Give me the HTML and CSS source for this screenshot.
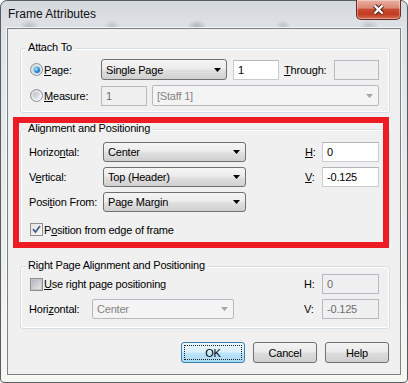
FILE: index.html
```html
<!DOCTYPE html>
<html lang="en">
<head>
    <meta charset="UTF-8">
    <title>Frame Attributes</title>
    <link rel="stylesheet" href="styles.css">
</head>
<body>
    <div class="window">
        <div class="titlebar">
            <span class="title">Frame Attributes</span>
            <div class="close-btn">
                <svg width="13" height="11" viewBox="0 0 13 11">
                    <path d="M2.5 1.5 L10.5 9.5 M10.5 1.5 L2.5 9.5" stroke="#4a1f17" stroke-width="4.2" fill="none"/>
                    <path d="M2.5 1.5 L10.5 9.5 M10.5 1.5 L2.5 9.5" stroke="#fff" stroke-width="2.4" fill="none"/>
                </svg>
            </div>
        </div>

        <div class="client">
            <!-- Attach To -->
            <div class="group attach">
                <span class="group-title">Attach To</span>
                <div class="row">
                    <label class="lead"><span class="radio on"></span><span><u>P</u>age:</span></label>
                    <div class="combo w-page">
                        <span>Single Page</span>
                        <svg class="arrow" width="7" height="4" viewBox="0 0 7 4"><path d="M0 0h7L3.5 4z"/></svg>
                    </div>
                    <div class="textbox w-num gap-6">1</div>
                    <span class="through"><u>T</u>hrough:</span>
                    <div class="textbox disabled w-thru"></div>
                </div>
                <div class="row">
                    <label class="lead"><span class="radio"></span><span><u>M</u>easure:</span></label>
                    <div class="textbox disabled w-num">1</div>
                    <div class="combo disabled w-staff">
                        <span>[Staff 1]</span>
                        <svg class="arrow" width="7" height="4" viewBox="0 0 7 4"><path d="M0 0h7L3.5 4z"/></svg>
                    </div>
                </div>
            </div>

            <!-- Alignment and Positioning -->
            <div class="group align">
                <span class="group-title">Alignment and Positioning</span>
                <div class="row">
                    <span class="field-label">Horizo<u>n</u>tal:</span>
                    <div class="combo w-align">
                        <span>Center</span>
                        <svg class="arrow" width="7" height="4" viewBox="0 0 7 4"><path d="M0 0h7L3.5 4z"/></svg>
                    </div>
                    <div class="side">
                        <span class="side-label"><u>H</u>:</span>
                        <div class="textbox w-hv">0</div>
                    </div>
                </div>
                <div class="row">
                    <span class="field-label">V<u>e</u>rtical:</span>
                    <div class="combo w-align">
                        <span>Top (Header)</span>
                        <svg class="arrow" width="7" height="4" viewBox="0 0 7 4"><path d="M0 0h7L3.5 4z"/></svg>
                    </div>
                    <div class="side">
                        <span class="side-label"><u>V</u>:</span>
                        <div class="textbox w-hv">-0.125</div>
                    </div>
                </div>
                <div class="row">
                    <span class="field-label">Posi<u>t</u>ion From:</span>
                    <div class="combo w-align">
                        <span>Page Margin</span>
                        <svg class="arrow" width="7" height="4" viewBox="0 0 7 4"><path d="M0 0h7L3.5 4z"/></svg>
                    </div>
                </div>
                <label class="check-row">
                    <span class="checkbox">
                        <svg width="9" height="9" viewBox="0 0 9 9"><path d="M1 4.2 L3.5 7 L8 1" stroke="#4c5f8e" stroke-width="1.8" fill="none"/></svg>
                    </span>
                    <span>P<u>o</u>sition from edge of frame</span>
                </label>
            </div>

            <!-- Right Page Alignment and Positioning -->
            <div class="group right-page">
                <span class="group-title">Right Page Alignment and Positioning</span>
                <div class="row">
                    <label class="check-row">
                        <span class="checkbox off"></span>
                        <span><u>U</u>se right page positioning</span>
                    </label>
                    <div class="side">
                        <span class="side-label wide">H:</span>
                        <div class="textbox disabled w-hv">0</div>
                    </div>
                </div>
                <div class="row">
                    <span class="field-label short">Hori<u>z</u>ontal:</span>
                    <div class="combo disabled w-right">
                        <span>Center</span>
                        <svg class="arrow" width="7" height="4" viewBox="0 0 7 4"><path d="M0 0h7L3.5 4z"/></svg>
                    </div>
                    <div class="side">
                        <span class="side-label wide">V:</span>
                        <div class="textbox disabled w-hv">-0.125</div>
                    </div>
                </div>
            </div>

            <div class="buttons">
                <button class="btn default">OK</button>
                <button class="btn">Cancel</button>
                <button class="btn">Help</button>
            </div>
        </div>

        <div class="highlight"></div>
    </div>
</body>
</html>
```

FILE: styles.css
```css
/* General */
* {
    box-sizing: border-box;
}

body {
    margin: 0;
    background: #fff;
}

/* Window frame */
.window {
    position: relative;
    width: 408px;
    height: 383px;
    padding: 0 6px 7px 6px;
    border: 1px solid #575d64;
    border-radius: 7px 7px 4px 4px;
    background: linear-gradient(180deg, #d5d9de 0%, #e2e5e8 10%, #eaeceb 50%, #f6f7f0 100%);
    font-family: "Liberation Sans", Arial, sans-serif;
    font-size: 11px;
    letter-spacing: -0.2px;
    color: #000;
}

.titlebar {
    height: 27px;
    display: flex;
    justify-content: space-between;
    align-items: flex-start;
    background:
        radial-gradient(ellipse 10px 6px at 22px 25px, rgba(120, 125, 130, 0.35), transparent),
        radial-gradient(ellipse 8px 6px at 105px 25px, rgba(120, 125, 130, 0.3), transparent),
        radial-gradient(ellipse 10px 6px at 190px 25px, rgba(110, 115, 120, 0.4), transparent),
        radial-gradient(ellipse 8px 6px at 276px 25px, rgba(120, 125, 130, 0.3), transparent),
        radial-gradient(ellipse 10px 6px at 362px 25px, rgba(120, 125, 130, 0.3), transparent);
}

.title {
    margin: 6px 0 0 1px;
    font-size: 12px;
    line-height: 15px;
    letter-spacing: 0;
    color: #111;
}

.close-btn {
    width: 45px;
    height: 20px;
    margin-top: -1px;
    display: flex;
    align-items: center;
    justify-content: center;
    border: 1px solid #6a2a20;
    border-top: none;
    border-radius: 0 0 5px 5px;
    background: linear-gradient(180deg, #eab0a2 0%, #dc8873 42%, #c84a30 50%, #c13c21 75%, #d56c52 100%);
    box-shadow: inset 0 0 0 1px rgba(255, 255, 255, 0.35);
}

/* Client area */
.client {
    width: 394px;
    height: 347px;
    padding: 0 10px 0 12px;
    border: 1px solid #7b8086;
    background: #f0f0f0;
    box-shadow: 0 0 0 1px rgba(255, 255, 255, 0.7);
}

/* Group boxes */
.group {
    position: relative;
    border: 1px solid #d5dfe5;
    border-radius: 3px;
    box-shadow: inset 0 0 0 1px #fff;
}

.group-title {
    position: absolute;
    top: -8px;
    left: 5px;
    padding: 0 2px;
    line-height: 13px;
    background: #f0f0f0;
}

.attach {
    margin-top: 19px;
    padding: 10px 10px 6px 9px;
}

.align {
    margin-top: 16px;
    padding: 12px 10px 9px 8px;
}

.right-page {
    margin-top: 20px;
    padding: 7px 10px 9px 8px;
}

.row {
    display: flex;
    align-items: center;
    height: 20px;
}

.attach .row {
    height: 21px;
}

.row + .row {
    margin-top: 5px;
}

.lead {
    width: 71px;
    display: flex;
    align-items: center;
    gap: 1px;
}

.field-label {
    width: 74px;
}

.field-label.short {
    width: 63px;
}

.through {
    width: 50px;
    margin-left: 5px;
}

.side {
    margin-left: auto;
    display: flex;
    align-items: center;
}

.side-label {
    width: 17px;
}

.side-label.wide {
    width: 18px;
}

/* Radio buttons */
.radio {
    width: 13px;
    height: 13px;
    display: flex;
    align-items: center;
    justify-content: center;
    border: 1px solid #8a8f96;
    border-radius: 50%;
    background: linear-gradient(135deg, #d3d6da 0%, #fdfdfd 100%);
}

.radio::after {
    content: '';
    width: 7px;
    height: 7px;
    border-radius: 50%;
    background: linear-gradient(135deg, #b9bec5 0%, #eef0f2 100%);
}

.radio.on::after {
    width: 6px;
    height: 6px;
    background: radial-gradient(circle at 35% 35%, #b5eaff 0%, #3a9ae0 40%, #0f4f92 100%);
    box-shadow: 0 0 1px 1px rgba(90, 170, 230, 0.45);
}

/* Checkboxes */
.check-row {
    display: flex;
    align-items: center;
    gap: 1px;
    height: 13px;
    margin-left: 1px;
}

.align .check-row {
    margin-top: 11px;
}

.checkbox {
    width: 13px;
    height: 13px;
    display: flex;
    align-items: center;
    justify-content: center;
    border: 1px solid #8e8f8f;
    background: linear-gradient(135deg, #e4e4e4 0%, #f8f8f8 100%);
}

.checkbox.off::after {
    content: '';
    width: 9px;
    height: 9px;
    border: 1px solid #c2c4c8;
    background: linear-gradient(135deg, #b3b7bd 0%, #e6e7e9 100%);
}

/* Combo boxes */
.combo {
    height: 100%;
    display: flex;
    align-items: center;
    justify-content: space-between;
    padding: 0 5px 0 4px;
    border: 1px solid #707070;
    border-radius: 3px;
    background: linear-gradient(180deg, #f5f5f5 0%, #ececec 45%, #dfdfdf 55%, #d0d0d0 100%);
}

.combo .arrow {
    fill: #000;
}

.combo.disabled {
    border-color: #b5b9bc;
    border-radius: 2px;
    background: #f4f4f4;
    color: #838383;
}

.combo.disabled .arrow {
    fill: #a6a6a6;
}

.w-page { width: 126px; }
.w-staff { width: 227px; margin-left: 5px; }
.w-align { width: 143px; }
.w-right { width: 142px; }

/* Text boxes */
.textbox {
    height: 20px;
    display: flex;
    align-items: center;
    padding: 0 4px;
    border: 1px solid #c9ccd1;
    border-top-color: #b2b6bc;
    background: #fff;
}

.textbox.disabled {
    border-color: #b7b9bc;
    background: #f0f0f0;
    color: #6d6d6d;
}

.w-num { width: 46px; }
.w-thru { width: 45px; }
.w-hv { width: 57px; }
.gap-6 { margin-left: 6px; }

/* Buttons */
.buttons {
    display: flex;
    justify-content: flex-end;
    gap: 8px;
    margin-top: 13px;
    padding-right: 1px;
}

.btn {
    width: 64px;
    height: 21px;
    padding: 0;
    border: 1px solid #707070;
    border-radius: 3px;
    background: linear-gradient(180deg, #f2f2f2 0%, #ebebeb 48%, #dddddd 52%, #cfcfcf 100%);
    font-family: inherit;
    font-size: 11px;
    letter-spacing: inherit;
    color: #000;
}

.btn.default {
    border-color: #3c7fb1;
    background: linear-gradient(180deg, #eaf6fd 0%, #d9f0fc 48%, #bee6fd 52%, #a7d9f5 100%);
    outline: 1px dotted #222;
    outline-offset: -4px;
}

/* Red annotation frame */
.highlight {
    position: absolute;
    left: 12px;
    top: 116px;
    width: 376px;
    height: 131px;
    border: 6px solid #ed1c24;
}
```
